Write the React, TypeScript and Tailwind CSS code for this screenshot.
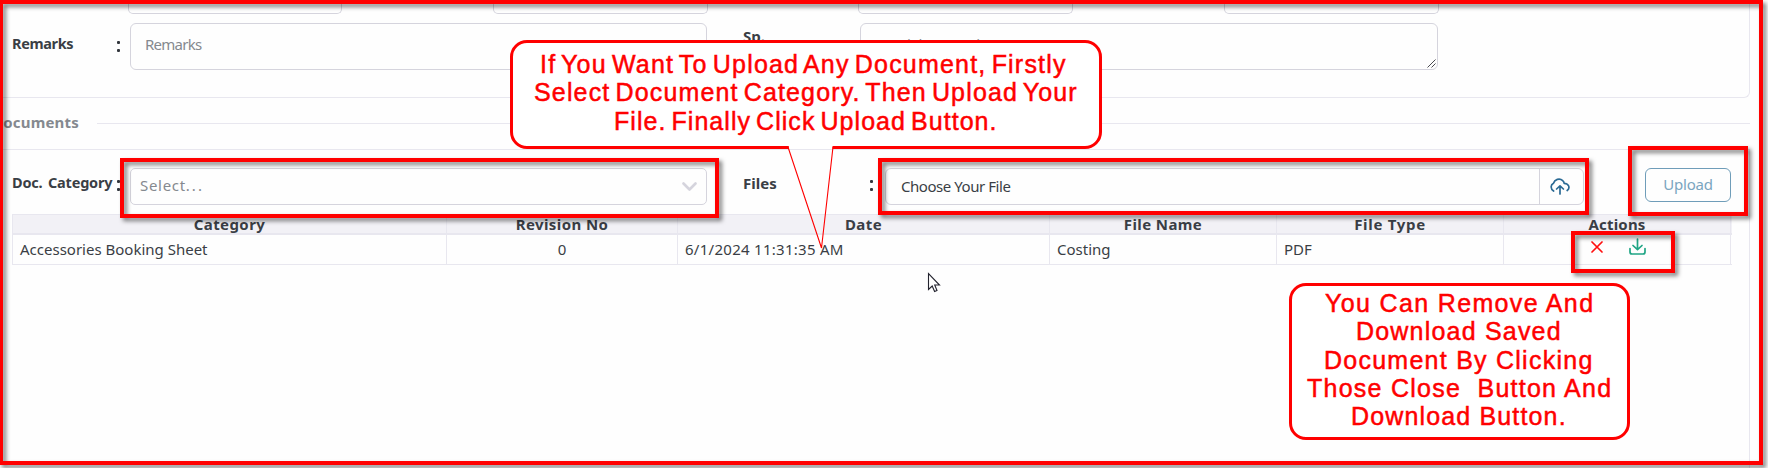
import React from "react";

const UI = "font-['Trebuchet_MS','Noto_Sans',sans-serif]";

function Colon() {
  return (
    <span className="flex w-1 flex-col gap-[5px]">
      <i className="h-[3px] w-[3px] rounded-[1px] bg-[#32363d]" />
      <i className="h-[3px] w-[3px] rounded-[1px] bg-[#32363d]" />
    </span>
  );
}

function Frame({ className }: { className: string }) {
  return (
    <div
      className={`absolute border-4 border-[#ff0000] [filter:drop-shadow(3px_3px_2px_rgba(0,0,0,0.5))] ${className}`}
    />
  );
}

function Line({ className, children }: { className: string; children: React.ReactNode }) {
  return <div className={`w-max whitespace-pre ${className}`}>{children}</div>;
}

const th = "flex items-start justify-center border-r border-[#e8e7ef] pt-[2px] text-[15px] leading-[15px] font-bold";
const td = "flex items-center border-r border-[#e8e7ef] px-[7px] pb-px";
const grid = "grid grid-cols-[434px_231px_372px_227px_227px_227px]";
const topInput = "h-[14px] rounded-b-[5px] border border-t-0 border-[#d5d4dd]";
const callout =
  "absolute rounded-[17px] border-[3px] border-[#ff0000] bg-white font-['Liberation_Sans',sans-serif] text-[25px] leading-[28.3px] text-[#ff0000] [-webkit-text-stroke:0.5px_#ff0000]";

export default function App() {
  return (
    <div className={`relative h-[468px] w-[1768px] overflow-hidden bg-[#fefefe] text-[15px] text-[#3a3e45] ${UI}`}>
      <div className="flex h-full w-[1750px] flex-col">
        <section className="h-[98px] rounded-br-md border-r border-b border-[#e8e7ef]">
          <div className="ml-32 flex h-[14px]">
            <div className={`${topInput} w-[214px]`} />
            <div className={`${topInput} ml-[151px] w-[215px]`} />
            <div className={`${topInput} ml-[150px] w-[215px]`} />
            <div className={`${topInput} ml-[151px] w-[215px]`} />
          </div>
          <div className="mt-[9px] flex h-[47px] pl-3">
            <div className="w-[105px] pt-[10px] text-[14.5px] font-bold">
              <span className="tracking-[-0.35px]">Remarks</span>
            </div>
            <div className="w-[13px] pt-[18px]"><Colon /></div>
            <div className="w-[577px] rounded-md border border-[#d5d4dd] pt-[9px] pl-[14px] text-[#85898f]">
              <span className="tracking-[-0.75px]">Remarks</span>
            </div>
            <div className="w-[153px] pt-[2px] pl-9 font-bold">Sp.</div>
            <div className="relative w-[578px] rounded-md border border-[#d5d4dd] pt-[9px] pl-[15px] text-[#85898f]">
              <span className="tracking-[-0.5px]">Special Instruction</span>
              <svg className="absolute right-px bottom-px" width="9" height="9" stroke="#4a4a50" strokeWidth="1">
                <path d="M.5 8.5l8-8M4.5 8.5l4-4" fill="none" />
              </svg>
            </div>
          </div>
        </section>
        <div className="flex h-[51px] items-center gap-[18px] font-bold text-[#85898f]">
          <span className="-ml-[9px] w-[88px] pb-[2px] text-right tracking-[0.2px]">Documents</span>
          <span className="h-px flex-1 bg-[#e8e7ef]" />
        </div>
        <section className="flex-1 border-t border-r border-[#e8e7ef] pt-[18px] pl-3">
          <div className="flex h-[37px]">
            <div className="w-[105px] pt-1 text-[14.5px] font-bold whitespace-nowrap">
              <span className="tracking-[-0.2px] [word-spacing:2px]">Doc. Category</span>
            </div>
            <div className="w-[13px] pt-3"><Colon /></div>
            <div className="flex w-[577px] items-center justify-between rounded-[5px] border border-[#d5d4dd] pr-[9px] pl-[9px] text-[#85898f]">
              <span className="pb-[2px] tracking-[0.7px]">Select<span className="tracking-[2px]">...</span></span>
              <svg width="15" height="9" viewBox="0 0 15 9" fill="none" stroke="#d5d4dd" strokeWidth="2.6" strokeLinecap="round" strokeLinejoin="round">
                <path d="M1.5 1.5l6 6 6-6" />
              </svg>
            </div>
            <div className="w-[163px] pt-1 pl-9 font-bold">Files</div>
            <div className="w-[15px] pt-3"><Colon /></div>
            <div className="flex w-[699px] rounded-md border border-[#d5d4dd]">
              <div className="flex flex-1 items-center pb-px pl-[15px]">
                <span className="tracking-[-0.45px]">Choose Your File</span>
              </div>
              <div className="flex w-[44px] items-center justify-center border-l border-[#d5d4dd] pr-[3px]">
                <svg width="20" height="17" viewBox="0 0 20 17" fill="none" stroke="#2b6a94" strokeWidth="1.7" strokeLinecap="round" strokeLinejoin="round">
                  <path d="M3.6 13C.5 11 .2 6.8 3.5 5.2 4.5 1.500 9.500-.5 12.700 2.600c1 .9 1.400 1.800 1.500 2.700 4.700.2 6.200 4.700 3 7.200M10 16V8M6.600 11L10 7.800 13.400 11" />
                </svg>
              </div>
            </div>
            <button className="ml-[61px] h-[34px] w-[86px] rounded-md border border-[#6f9db9] pb-[2px] tracking-[-0.2px] text-[#7aa5c0]">Upload</button>
          </div>
          <div className="mt-[9px] w-[1720px] border border-[#e8e7ef] border-r-0 text-[15px]">
            <div className={`${grid} h-[20px] border-b-2 border-[#e8e7ef] bg-[#f2f1f6]`}>
              <div className={th}><span className="tracking-[0.4px]">Category</span></div>
              <div className={th}><span className="tracking-[0.4px]">Revision No</span></div>
              <div className={th}><span className="tracking-[0.4px]">Date</span></div>
              <div className={th}><span className="tracking-[0.4px]">File Name</span></div>
              <div className={th}><span className="tracking-[0.7px]">File Type</span></div>
              <div className={th}><span className="tracking-[0.2px]">Actions</span></div>
            </div>
            <div className={`${grid} h-[29px]`}>
              <div className={td}><span>Accessories Booking Sheet</span></div>
              <div className={`${td} justify-center`}>0</div>
              <div className={td}><span className="tracking-[0.28px]">6/1/2024 11:31:35 AM</span></div>
              <div className={td}><span>Costing</span></div>
              <div className={td}><span>PDF</span></div>
              <div className="flex items-start border-r border-[#e8e7ef] pt-[3px] pl-[87px]">
                <svg className="mt-[3px]" width="12" height="12" stroke="#ff1010" strokeWidth="1.7" strokeLinecap="round">
                  <path d="M1 1l10 10M11 1L1 11" />
                </svg>
                <svg className="ml-[26px]" width="17" height="17" viewBox="0 0 17 17" fill="none" stroke="#1fa585" strokeWidth="1.7" strokeLinecap="round" strokeLinejoin="round">
                  <path d="M1 10.500V14q0 2 2 2H14q2 0 2-2V10.500M8.500 1V11.500M4 7.500l4.500 4.200L13 7.500" />
                </svg>
              </div>
            </div>
          </div>
        </section>
      </div>

      <Frame className="top-[158px] left-[120px] h-[60px] w-[599px]" />
      <Frame className="top-[158px] left-[878px] h-[57px] w-[711px]" />
      <Frame className="top-[146px] left-[1628px] h-[70px] w-[120px]" />
      <Frame className="top-[231px] left-[1571px] h-[42px] w-[104px]" />
      <Frame className="top-0 -left-px h-[465px] w-[1764px]" />

      <div className={`${callout} top-[40px] left-[510px] h-[109px] w-[592px]`}>
        <Line className="mt-[7px] ml-[27px] tracking-[1.2px] [word-spacing:-3px]">If You Want To Upload Any Document, Firstly</Line>
        <Line className="ml-[21px] tracking-[1.15px] [word-spacing:-3px]">Select Document Category. Then Upload Your</Line>
        <Line className="ml-[101px] tracking-[1.05px] [word-spacing:-3px]">File. Finally Click Upload Button.</Line>
      </div>
      <svg className="absolute top-[146px] left-[780px]" width="60" height="106">
        <path d="M8.800 0H52.500V3H8.800Z" fill="#fff" />
        <path d="M8 1L41.500 102L53 1" fill="none" stroke="#ff0000" strokeWidth="1.1" />
      </svg>

      <div className={`${callout} top-[283px] left-[1289px] h-[157px] w-[341px]`}>
        <Line className="mt-[3px] ml-[33px] tracking-[1.35px]">You Can Remove And</Line>
        <Line className="ml-[64px] tracking-[1.2px]">Download Saved</Line>
        <Line className="ml-[32px] tracking-[1.25px]">Document By Clicking</Line>
        <Line className="ml-[15px] tracking-[1.25px]">{"Those Close  Button And"}</Line>
        <Line className="ml-[59px] tracking-[1.15px]">Download Button.</Line>
      </div>

      <svg className="absolute top-[272px] left-[927px]" width="14" height="21" viewBox="0 0 14 21">
        <path d="M1.500 1.500V17.500L5.200 14 7.600 19.500 10 18.500 7.700 13H12.500Z" fill="#fff" stroke="#23232e" strokeWidth="1.1" />
      </svg>
    </div>
  );
}
